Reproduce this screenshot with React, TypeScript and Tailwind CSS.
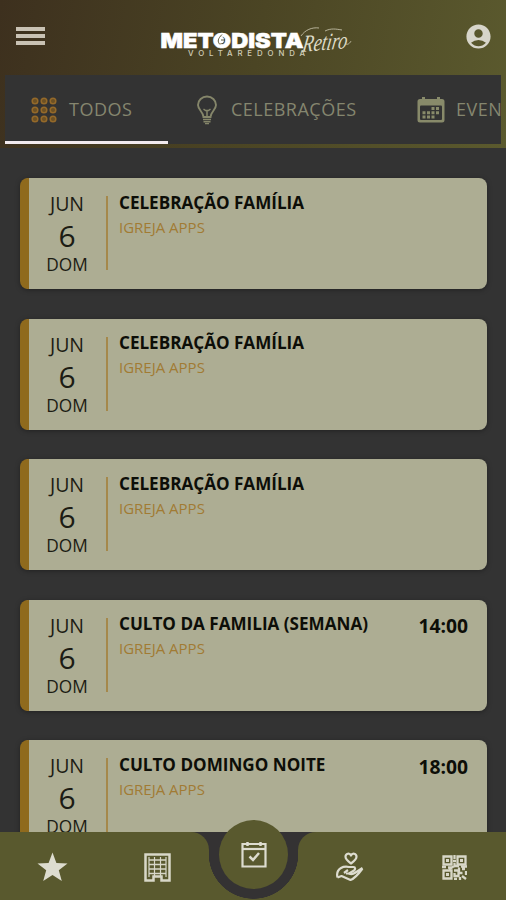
import { MdAccountCircle } from "react-icons/md";

interface ChurchEvent {
  id: number;
  title: string;
  time?: string;
}

const events: ChurchEvent[] = [
  { id: 1, title: "CELEBRAÇÃO FAMÍLIA" },
  { id: 2, title: "CELEBRAÇÃO FAMÍLIA" },
  { id: 3, title: "CELEBRAÇÃO FAMÍLIA" },
  { id: 4, title: "CULTO DA FAMILIA (SEMANA)", time: "14:00" },
  { id: 5, title: "CULTO DOMINGO NOITE", time: "18:00" },
];

function Logo() {
  return (
    <svg width="196" height="40" viewBox="0 0 196 40" fill="#fff" className="shrink-0">
      <text x="0.500" y="24.500" fontSize="20.500" fontWeight="900" fontFamily="Inter, sans-serif" textLength="143" lengthAdjust="spacingAndGlyphs" stroke="#fff" strokeWidth="0.500">
        METODISTA
      </text>
      {/* flame cut into the O */}
      <circle cx="60.500" cy="17" r="3.500" />
      <path d="M62 11.500c-4 4-5 7-2 10M61 17h4" fill="none" stroke="#4b4524" strokeWidth="0.900" />
      <text x="28" y="33" fontSize="7.800" fontWeight="500" fontFamily="Inter, sans-serif" textLength="117" fill="#d0cdb8">
        VOLTAREDONDA
      </text>
      <text transform="rotate(-5 142 31) skewX(-14)" x="149" y="29" fontSize="24" fontStyle="italic" fontFamily="'Liberation Serif', serif" textLength="45" lengthAdjust="spacingAndGlyphs" fill="#dedbc8">
        Retiro
      </text>
      <path d="M141 13c4-6 11-9 18-8M165 8c6-3 11-2 17-1M186 21c2 1 4-1 5-3" fill="none" stroke="#cfccb5" strokeWidth="0.800" />
    </svg>
  );
}

function DotsIcon() {
  return (
    <svg width="26" height="26" viewBox="0 0 26 26" fill="#6d5124" stroke="#94692a" strokeWidth="1.500">
      {[4, 13, 22].map((y) => [4, 13, 22].map((x) => <circle key={`${x}-${y}`} cx={x} cy={y} r="2.800" />))}
    </svg>
  );
}

function BulbIcon() {
  return (
    <svg width="22" height="30" viewBox="0 0 22 30" fill="none" stroke="#85866a" strokeWidth="1.900">
      <path d="M7.500 22c0-5-5.500-7-5.500-12a9 8.500 0 0118 0c0 5-5.500 7-5.500 12z" />
      <path d="M7.500 14l2 1.500h3l2-1.500M11 15.500V22" strokeWidth="1.500" />
      <path d="M7 24.500h8M7.500 26.700h7M9 28.600h4" strokeWidth="1.400" />
    </svg>
  );
}

function CalendarIcon() {
  return (
    <svg width="28" height="28" viewBox="0 0 28 28" fill="#888a6a">
      <path d="M3 3h2V1h3v2h12V1h3v2h2a2.500 2.500 0 012.500 2.500V24a2.500 2.500 0 01-2.500 2.500H3A2.500 2.500 0 01.500 24V5.500A2.500 2.500 0 013 3z" />
      <rect x="3" y="9.500" width="22" height="14.500" rx="1" fill="#333" />
      <path d="M14.500 11h3v3h-3zM19 11h3v3h-3zM5.500 15.200h3v3h-3zM10 15.200h3v3h-3zM14.500 15.200h3v3h-3zM19 15.200h3v3h-3zM5.500 19.500h3v3h-3zM10 19.500h3v3h-3zM14.500 19.500h3v3h-3z" />
    </svg>
  );
}

function StarIcon() {
  return (
    <svg width="31" height="30" viewBox="0 0 31 30" fill="#dddccf">
      <path d="M15.500.500l3.900 10.400 11.100.500-8.700 6.900 3 10.700-9.300-6.100L6.200 29l3-10.700L.500 11.400l11.100-.500z" />
    </svg>
  );
}

function BuildingIcon() {
  return (
    <svg width="27" height="29" viewBox="0 0 27 29" fill="none" stroke="#d8d7c8">
      <path d="M1.500 1.500h24v26h-8v-4h-8v4h-8z" strokeWidth="2.500" />
      <path d="M5 7h17M5 11.500h17M5 16h17M5 20.500h17" strokeWidth="1.700" />
      <path d="M5 4v20M10.500 4v20M16.500 4v20M22 4v20" strokeWidth="1.200" />
    </svg>
  );
}

function CalendarCheckIcon() {
  return (
    <svg width="26" height="28" viewBox="0 0 26 28" fill="none" stroke="#dddccf" strokeWidth="2.200">
      <path d="M1.500 3h23v22.500h-23z" />
      <path d="M1.500 8h23" />
      <path d="M6.500 1v4M19.500 1v4" strokeWidth="2.500" />
      <path d="M8.500 15.500l3.500 3.500 6-7" strokeWidth="2.500" />
    </svg>
  );
}

function HandHeartIcon() {
  return (
    <svg width="28" height="30" viewBox="0 0 28 30" fill="none" stroke="#dddccf" strokeWidth="2.200" strokeLinejoin="round">
      <path d="M15 11.500c-3.500-2.500-5.500-4.300-5.500-6.700 0-3.500 4.200-4.300 5.500-1.300 1.300-3 5.500-2.200 5.500 1.300 0 2.400-2 4.200-5.500 6.700z" />
      <path d="M1.500 25.500c-1-4 .200-7.500 3.500-9.500 2.500-1.500 5.500-1.500 8-1h4.500c2 0 2 2.700.500 3.500L13 21.500h-3" />
      <path d="M13 21.500c2 1 4.500.500 6.500-1l7-4.500M1.500 25.500l4-1.500 9 4c4-1.500 8-6 12-11.500M8 21l4-3" />
    </svg>
  );
}

function QrIcon() {
  return (
    <svg width="25" height="25" viewBox="0 0 25 25" fill="none" stroke="#d8d7c8" strokeWidth="2.300">
      <path d="M1.500 1.500h8v8h-8zM15.500 1.500h8v8h-8zM1.500 15.500h8v8h-8z" />
      <path d="M4 5.500h3M18 5.500h3M4 19.500h3" strokeWidth="3" />
      <path d="M12.500 0v4M11 6h3M12.500 8v4M0 12h4M6 12.500h4l-3 2M10 12l4-1h3M19 11.500h6M12 15.500h5v-3M20 14h3M12.500 18v3h4v-3h4M12 24h3M18 22v3M20 21l4 3M24 16v4" />
    </svg>
  );
}

function EventCard({ event }: { event: ChurchEvent }) {
  return (
    <article className="flex h-[111px] shrink-0 rounded-lg border-l-[9px] border-[#8f6a1d] bg-[#adad93] shadow-[0_1px_5px_rgba(0,0,0,0.35)]">
      <div className="flex w-[77px] flex-col items-center pr-px pt-[14px] text-[#1c1c14]">
        <span className="text-[19.500px] leading-[24px]">JUN</span>
        <span className="mt-[3px] text-[30px] leading-[34px]">6</span>
        <span className="text-[17.300px] leading-[24px]">DOM</span>
      </div>
      <div className="mt-[18px] h-[74px] w-[1.500px] bg-[#a5884b]" />
      <div className="flex-1 pl-[11.500px] pt-[12.500px]">
        <h2 className="whitespace-nowrap text-[17.100px] font-bold leading-[23px] text-[#0d0e08]">{event.title}</h2>
        <p className="mt-[3px] text-[15px] leading-[20px] text-[#a17b34]">IGREJA APPS</p>
      </div>
      {event.time && <time className="pr-[19px] pt-[13.500px] text-[19.300px] font-bold leading-[26px] text-[#0d0e08]">{event.time}</time>}
    </article>
  );
}

export default function App() {
  return (
    <div className="flex h-[900px] w-[506px] flex-col overflow-hidden bg-[#333333] font-['Open_Sans',sans-serif]">
      <header className="shrink-0 bg-linear-100 from-[#3d301e] via-[#4b4524] to-[#5b5a2e]">
        <div className="flex h-[75px] items-center pl-4 pr-[13px]">
          <button className="mb-[4px] flex flex-col gap-[3px]" aria-label="Menu">
            <span className="h-1 w-[29px] bg-[#c9c2b4]" />
            <span className="h-1 w-[29px] bg-[#c9c2b4]" />
            <span className="h-1 w-[29px] bg-[#c9c2b4]" />
          </button>
          <div className="ml-[115px] mt-[10px]">
            <Logo />
          </div>
          <MdAccountCircle className="mb-[3px] ml-auto size-[29px] text-[#d7d5ca]" />
        </div>
        <nav className="mx-[5px] mb-1 flex h-[69px] overflow-hidden bg-[#333333] text-[18px] tracking-[0.5px] text-[#85866f]">
          <div className="flex w-[163px] shrink-0 items-center border-b-[3px] border-[#f2eaed] pl-[26px] pt-[3px]">
            <DotsIcon />
            <span className="ml-[12px]">TODOS</span>
          </div>
          <div className="flex w-[220px] shrink-0 items-center pl-[28px]">
            <BulbIcon />
            <span className="ml-[13px]">CELEBRAÇÕES</span>
          </div>
          <div className="flex shrink-0 items-center pl-[29px]">
            <CalendarIcon />
            <span className="ml-[11px]">EVEN</span>
          </div>
        </nav>
      </header>

      <main className="flex min-h-0 flex-1 flex-col gap-[29.600px] overflow-hidden pl-5 pr-[19px] pt-[30px]">
        {events.map((event) => (
          <EventCard key={event.id} event={event} />
        ))}
      </main>

      <footer className="flex h-[68px] shrink-0 bg-[#343233] text-[#dddccf]">
        <div className="flex w-[209px] items-center rounded-tr-[18px] bg-[#59592e] pl-[37px] pt-[2px]">
          <StarIcon />
          <div className="ml-[76px]">
            <BuildingIcon />
          </div>
        </div>
        <div className="flex w-[89px] justify-center bg-[linear-gradient(#343233_22px,transparent_22px),radial-gradient(circle_at_50%_22px,#343233_44.500px,#59592e_45px)]">
          <div className="-mt-3 flex size-[69px] shrink-0 items-center justify-center rounded-full bg-[#59592e]">
            <CalendarCheckIcon />
          </div>
        </div>
        <div className="flex flex-1 items-center rounded-tl-[18px] bg-[#59592e] pl-[38px] pt-[2px]">
          <HandHeartIcon />
          <div className="ml-[78px]">
            <QrIcon />
          </div>
        </div>
      </footer>
    </div>
  );
}
